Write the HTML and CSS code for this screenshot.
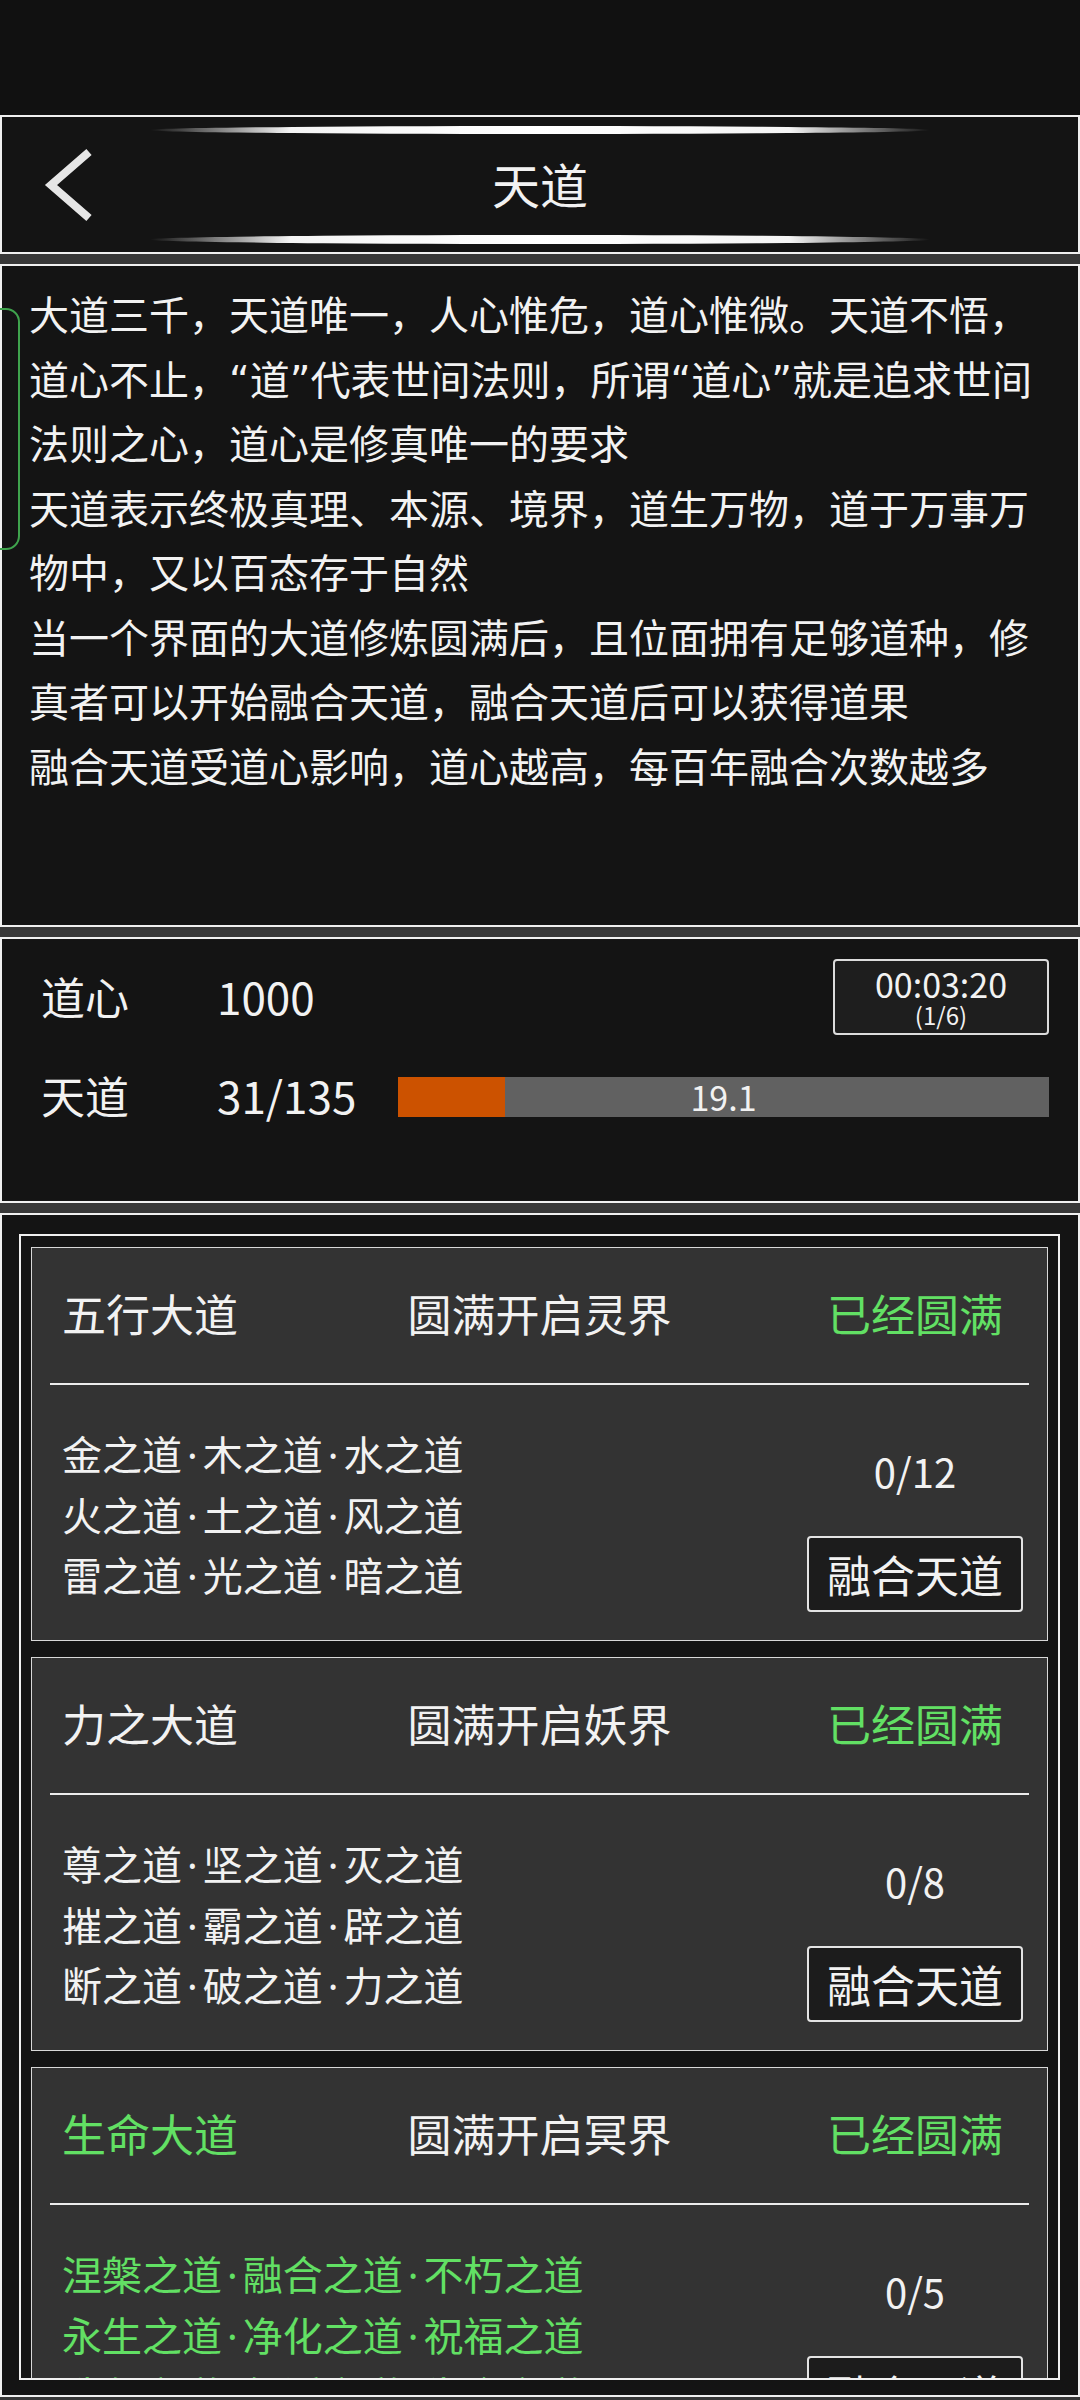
FILE: index.html
```html
<!DOCTYPE html>
<html lang="zh-CN">

<head>
  <meta charset="UTF-8">
  <title>天道</title>

  <link rel="stylesheet" href="styles.css">

</head>

<body>
  <div class="statusbar"></div>

  <!-- 标题栏 -->
  <div class="panel header">
    <div class="glow"></div>
    <div class="header-row">
      <div class="back">
        <svg width="50" height="76" viewBox="0 0 50 76">
          <polyline points="46,5 8,38 46,71" fill="none" stroke="#e6e6e6" stroke-width="8" stroke-linejoin="miter" stroke-linecap="butt" />
        </svg>
      </div>
      <div class="title">天道</div>
      <div></div>
    </div>
    <div class="glow"></div>
  </div>

  <!-- 说明 -->
  <div class="panel intro">
    <div class="bracket"></div>
    <p>大道三千，天道唯一，人心惟危，道心惟微。天道不悟，道心不止，“道”代表世间法则，所谓“道心”就是追求世间法则之心，道心是修真唯一的要求</p>
    <p>天道表示终极真理、本源、境界，道生万物，道于万事万物中，又以百态存于自然</p>
    <p>当一个界面的大道修炼圆满后，且位面拥有足够道种，修真者可以开始融合天道，融合天道后可以获得道果</p>
    <p>融合天道受道心影响，道心越高，每百年融合次数越多</p>
  </div>

  <!-- 道心 / 天道 -->
  <div class="panel stats">
    <div class="label">道心</div>
    <div class="value">1000</div>
    <div class="timer">
      <div class="timer-time">00:03:20</div>
      <div class="timer-count">(1/6)</div>
    </div>
    <div class="label">天道</div>
    <div class="value">31/135</div>
    <div class="bar">
      <div class="bar-fill" style="width: 16.5%"></div>
      <div class="bar-text">19.1</div>
    </div>
  </div>

  <!-- 大道列表 -->
  <div class="panel list">
    <div class="frame">

      <div class="card">
        <div class="card-head">
          <div class="card-name">五行大道</div>
          <div class="card-goal">圆满开启灵界</div>
          <div class="card-state">已经圆满</div>
        </div>
        <div class="divider"></div>
        <div class="card-body">
          <div class="ways">
            <div>金之道<span class="dot">·</span>木之道<span class="dot">·</span>水之道</div>
            <div>火之道<span class="dot">·</span>土之道<span class="dot">·</span>风之道</div>
            <div>雷之道<span class="dot">·</span>光之道<span class="dot">·</span>暗之道</div>
          </div>
          <div class="card-side">
            <div class="count">0/12</div>
            <div class="btn">融合天道</div>
          </div>
        </div>
      </div>

      <div class="card">
        <div class="card-head">
          <div class="card-name">力之大道</div>
          <div class="card-goal">圆满开启妖界</div>
          <div class="card-state">已经圆满</div>
        </div>
        <div class="divider"></div>
        <div class="card-body">
          <div class="ways">
            <div>尊之道<span class="dot">·</span>坚之道<span class="dot">·</span>灭之道</div>
            <div>摧之道<span class="dot">·</span>霸之道<span class="dot">·</span>辟之道</div>
            <div>断之道<span class="dot">·</span>破之道<span class="dot">·</span>力之道</div>
          </div>
          <div class="card-side">
            <div class="count">0/8</div>
            <div class="btn">融合天道</div>
          </div>
        </div>
      </div>

      <div class="card green">
        <div class="card-head">
          <div class="card-name">生命大道</div>
          <div class="card-goal">圆满开启冥界</div>
          <div class="card-state">已经圆满</div>
        </div>
        <div class="divider"></div>
        <div class="card-body">
          <div class="ways">
            <div>涅槃之道<span class="dot">·</span>融合之道<span class="dot">·</span>不朽之道</div>
            <div>永生之道<span class="dot">·</span>净化之道<span class="dot">·</span>祝福之道</div>
            <div>造化之道<span class="dot">·</span>复活之道<span class="dot">·</span>生命之道</div>
          </div>
          <div class="card-side">
            <div class="count">0/5</div>
            <div class="btn">融合天道</div>
          </div>
        </div>
      </div>

    </div>
  </div>
</body>

</html>
```

FILE: styles.css
```css
/* 页面基础 */
body {
  margin: 0;
  background-color: #383838;
  color: #f2f2f2;
  font-family: "Noto Sans CJK SC", sans-serif;
}

.statusbar {
  height: 115px;
  background-color: #111111;
}

.panel {
  box-sizing: border-box;
  border: 2px solid #f0f0f0;
  background-color: #141414;
}

.panel + .panel {
  margin-top: 10px;
}

/* 标题栏 */
.header {
  height: 139px;
  display: flex;
  flex-direction: column;
}

.glow {
  height: 8px;
  margin: 9px 148px 0;
  border-radius: 50%;
  background: linear-gradient(to right, rgba(255, 255, 255, 0), #f4f4f4 18%, #ffffff 50%, #f4f4f4 82%, rgba(255, 255, 255, 0));
}

.glow:last-child {
  margin: 0 148px 8px;
  height: 9px;
}

.header-row {
  flex: 1;
  display: grid;
  grid-template-columns: 1fr auto 1fr;
  align-items: center;
}

.back {
  margin-left: 41px;
  height: 76px;
}

.title {
  font-size: 48px;
  line-height: 1;
  padding-bottom: 4px;
}

/* 说明文字 */
.intro {
  position: relative;
  height: 663px;
  padding: 18px 34px 0 27px;
  font-family: "DejaVu Sans", "Noto Sans CJK SC", sans-serif;
  font-size: 40px;
  line-height: 64.5px;
}

.intro p {
  margin: 0;
}

.bracket {
  position: absolute;
  left: -22px;
  top: 42px;
  width: 36px;
  height: 238px;
  border: 2px solid #3fa34d;
  border-radius: 14px;
}

/* 道心 天道 */
.stats {
  height: 266px;
  padding: 18px 29px 0 39px;
  display: grid;
  grid-template-columns: 176px 181px 1fr;
  grid-template-rows: 78px 76px;
  row-gap: 22px;
  align-items: center;
  font-size: 44px;
}

.label,
.value {
  line-height: 1;
}

.timer {
  justify-self: end;
  align-self: end;
  box-sizing: border-box;
  width: 216px;
  height: 76px;
  border: 2px solid #dcdcdc;
  border-radius: 4px;
  background-color: #1e1e1e;
  display: flex;
  flex-direction: column;
  align-items: center;
  justify-content: center;
}

.timer-time {
  font-size: 34px;
  line-height: 36px;
}

.timer-count {
  font-size: 24px;
  line-height: 26px;
}

.bar {
  position: relative;
  height: 40px;
  margin-top: 4px;
  background-color: #616161;
  display: flex;
}

.bar-fill {
  height: 100%;
  background-color: #cc5200;
}

.bar-text {
  position: absolute;
  left: 0;
  right: 0;
  top: 0;
  text-align: center;
  font-size: 34px;
  line-height: 40px;
}

/* 列表 */
.list {
  height: 1184px;
  padding: 19px 18px 0 17px;
}

.frame {
  box-sizing: border-box;
  height: 1146px;
  border: 2px solid #f0f0f0;
  padding: 11px 10px 0;
  overflow: hidden;
  display: flex;
  flex-direction: column;
  gap: 16px;
}

.card {
  flex: none;
  box-sizing: border-box;
  height: 394px;
  border: 1px solid #d8d8d8;
  background-color: #333333;
}

.card-head {
  box-sizing: border-box;
  height: 135px;
  padding: 0 30px 6px;
  display: grid;
  grid-template-columns: 1fr auto 1fr;
  align-items: center;
  font-size: 44px;
  line-height: 1;
}

.card-state {
  justify-self: end;
  padding-right: 14px;
  color: #62e064;
}

.divider {
  height: 2px;
  margin: 0 18px;
  background-color: #ececec;
}

.card-body {
  display: flex;
  justify-content: space-between;
  padding: 39px 24px 0 30px;
}

.ways {
  font-size: 40px;
  line-height: 59.5px;
}

.dot {
  font-family: "Noto Sans", sans-serif;
  margin: 0 5px;
}

.card-side {
  margin-top: 21px;
  width: 216px;
  display: flex;
  flex-direction: column;
  align-items: center;
  gap: 39px;
}

.count {
  font-size: 40px;
  line-height: 52px;
}

.btn {
  box-sizing: border-box;
  width: 216px;
  height: 76px;
  border: 2px solid #e4e4e4;
  border-radius: 4px;
  background-color: #1c1c1c;
  font-size: 44px;
  line-height: 72px;
  text-align: center;
}

.green .card-name,
.green .ways {
  color: #62e064;
}
```
